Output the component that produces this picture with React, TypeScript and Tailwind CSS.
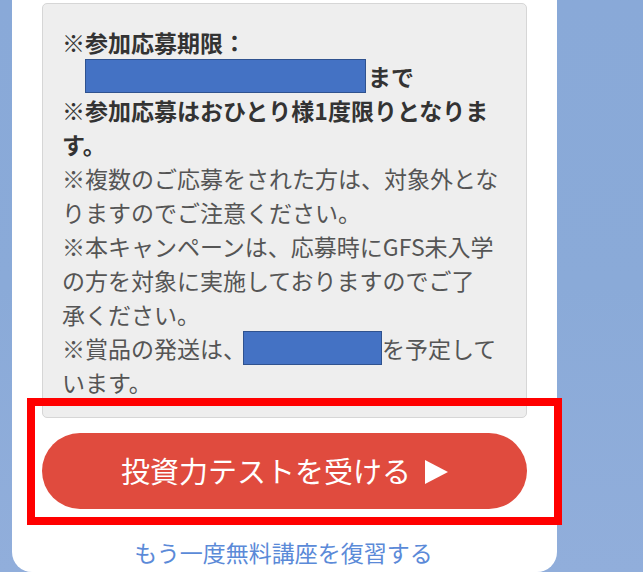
import React from 'react';

const font = { fontFamily: '"Noto Sans CJK JP", "Noto Sans", sans-serif' };

const Redacted = ({ className }: { className: string }) => (
  <span className={`inline-block align-middle bg-[#4472c4] border border-[#2f528f] ${className}`} />
);

export default function App() {
  return (
    <div
      className="w-[643px] h-[572px] overflow-hidden bg-gradient-to-b from-[#89a9d8] via-[#8aaad8] to-[#91aedb]"
      style={font}
    >
      <div className="relative ml-[12px] w-[545px] h-[572px] bg-white rounded-b-[20px] px-[30px] pt-[3px] flex flex-col">
        {/* notes */}
        <div className="bg-[#eeeeee] border border-[#d6d6d6] rounded-[5px] pl-[19px] pr-2 pt-[21px] pb-[18px] text-[23px] leading-[34px] text-[#555] whitespace-nowrap">
          <div className="font-bold text-[#333]">※参加応募期限：</div>
          <div className="font-bold text-[#333] h-[34px] flex items-center">
            <span>　</span>
            <Redacted className="w-[281px] h-[34px]" />
            <span className="ml-[2px]">まで</span>
          </div>
          <div className="font-bold text-[#333]">※参加応募はおひとり様1度限りとなりま</div>
          <div className="font-bold text-[#333]">す。</div>
          <div>※複数のご応募をされた方は、対象外とな</div>
          <div>りますのでご注意ください。</div>
          <div>※本キャンペーンは、応募時にGFS未入学</div>
          <div>の方を対象に実施しておりますのでご了</div>
          <div>承ください。</div>
          <div className="h-[34px] flex items-center">
            <span>※賞品の発送は、</span>
            <Redacted className="w-[139px] h-[34px] -ml-[3px]" />
            <span>を予定して</span>
          </div>
          <div>います。</div>
        </div>

        {/* cta */}
        <button className="mt-[15px] h-[76px] w-full rounded-full bg-[#e04b3e] text-white text-[29px] flex items-center justify-center gap-[14px]">
          <span>投資力テストを受ける</span>
          <svg width="23" height="24" viewBox="0 0 23 24" className="mt-[1px]">
            <polygon points="0,0 23,12 0,24" fill="#ffffff" />
          </svg>
        </button>

        <a className="mt-[26px] text-center text-[23px] leading-[34px] text-[#5b8ad8] pr-[2px]">
          もう一度無料講座を復習する
        </a>

        {/* annotation frame */}
        <div className="absolute left-[15px] top-[398px] w-[535px] h-[127px] border-[8px] border-[#ff0000]" />
      </div>
    </div>
  );
}
